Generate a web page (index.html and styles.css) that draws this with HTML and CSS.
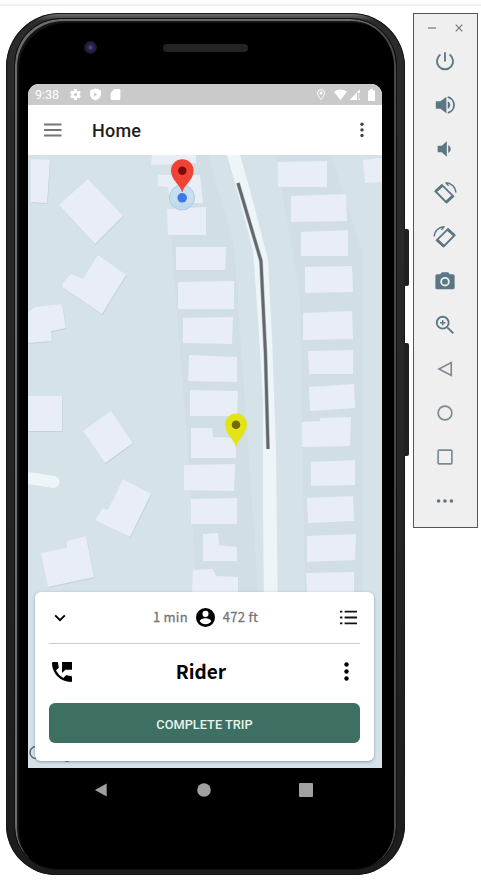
FILE: index.html
```html
<!DOCTYPE html>
<html lang="en">
<head>
<meta charset="utf-8">
<title>Home</title>
<link rel="stylesheet" href="styles.css">
</head>
<body>
<div class="topline"></div>
<main class="stage">
  <div class="phone">
    <i class="side-button power"></i>
    <i class="side-button volume"></i>
    <div class="bezel">
      <div class="forehead"><i class="camera"></i><i class="speaker"></i></div>
      <div class="screen">
        <div class="status">
          <span class="time">9:38</span>
          <svg class="s-gear" viewBox="0 0 24 24"><path d="M19.4 13a7.500 7.500 0 0 0 0-2l2.100-1.600a.5.500 0 0 0 .1-.7l-2-3.400a.5.500 0 0 0-.6-.2l-2.500 1a7.300 7.300 0 0 0-1.700-1l-.4-2.600a.5.500 0 0 0-.5-.5h-4a.5.500 0 0 0-.5.500L9 5.100a7.300 7.300 0 0 0-1.700 1l-2.500-1a.5.500 0 0 0-.6.200l-2 3.400a.5.500 0 0 0 .1.700L4.500 11a7.500 7.500 0 0 0 0 2l-2.200 1.600a.5.500 0 0 0-.1.700l2 3.400c.1.200.4.300.6.200l2.500-1a7.300 7.300 0 0 0 1.700 1l.4 2.600c0 .3.200.5.500.5h4c.3 0 .5-.2.500-.5l.4-2.600a7.300 7.300 0 0 0 1.700-1l2.500 1c.2.100.5 0 .6-.2l2-3.400a.5.500 0 0 0-.1-.7zM12 15a3 3 0 1 1 0-6 3 3 0 0 1 0 6z"/></svg>
          <svg class="s-shield" viewBox="0 0 24 24"><path fill-rule="evenodd" d="M12 1 2 4v8c0 5 5 9.500 10 11 5-1.500 10-6 10-11V4zM9.500 8 15 12l-5.500 4z"/></svg>
          <svg class="s-card" viewBox="0 0 24 24"><path d="M10 2h9a2 2 0 0 1 2 2v16a2 2 0 0 1-2 2H5a2 2 0 0 1-2-2V9z"/></svg>
          <span class="grow"></span>
          <svg class="s-pin" viewBox="0 0 24 24"><path fill="none" stroke="#fff" stroke-width="2" d="M12 22C8 17 5 13 5 9a7 7 0 0 1 14 0c0 4-3 8-7 13z"/><circle cx="12" cy="9" r="3"/></svg>
          <svg class="s-wifi" viewBox="0 0 24 24"><path d="M12 22 0 7a19 19 0 0 1 24 0z"/></svg>
          <svg class="s-signal" viewBox="0 0 24 24"><path d="M1 22 22 1v7h-6v14zM19 19h3v3h-3z"/><path d="M18 10h3v7h-3z" opacity=".4"/></svg>
          <svg class="s-battery" viewBox="0 0 14 24"><path d="M4 0h6v3h4v21H0V3h4z"/></svg>
        </div>
        <header class="appbar">
          <svg class="menu" viewBox="0 0 18 14"><path d="M0 1.500h17.500M0 7h17.500M0 12.500h17.500"/></svg>
          <h1>Home</h1>
          <svg class="more" viewBox="0 0 4 16"><circle cx="2" cy="2.300" r="1.700"/><circle cx="2" cy="7.900" r="1.700"/><circle cx="2" cy="13.500" r="1.700"/></svg>
        </header>
        <section class="map">
          <svg class="map-art" viewBox="28 155 354 613">
            <path class="yards" d="M170 155h38l26 90 24 345v20h-60l-10-160-16-200zM276 155h55l32 100v340h-58l-5-300z"/>
            <path class="road" d="M227 155 235 183 253 250 258 320 263 400 263 500 264 620H278L276 450 272 337 268 260 250 190 240 155z"/>
            <g class="shade" transform="translate(.6 1)">
              <path d="M31 159 50 160 47 203 31 202zM88 179 123 216 95 244 59 205zM98 255 126 275 102 314 62 287 63 283 71 274 83 279zM28 313 35 307 62 304 66 328 51 331 52 341 28 343zM28 396H62V431H28zM111 411 133 443 105 463 83 431zM123 479 151 494 130 537 108 525 112 500zM67 541 86 536 94 577 48 587 41 553 67 548z"/>
            </g>
            <g class="buildings">
              <path d="M31 159 50 160 47 203 31 202zM88 179 123 216 95 244 59 205zM98 255 126 275 102 314 62 287 63 283 71 274 83 279zM28 313 35 307 62 304 66 328 51 331 52 341 28 343zM28 396H62V431H28zM111 411 133 443 105 463 83 431zM123 479 151 494 130 537 95 520 103 508 108 510zM67 541 86 536 94 577 48 587 41 553 67 548z"/>
              <path d="M152 155H196V163L151 165zM158 175 200 175 203 203H170L168 187 158 186zM167 209 206 207V235H168zM176 247H226L225 270H176zM178 282 234 281V309H178zM183 318 233 317 232 344 183 343zM189 355 237 357V382L188 381zM190 390 238 391 237 416H190zM191 428H212L213 437 236 438V458H191zM184 465 235 464 234 491 184 490zM191 499 237 498V524H191zM203 534 218 533 219 545 237 547V561H203zM193 570 213 569 216 576 238 577V592H192z"/>
              <path d="M278 162 327 161V187H278zM291 196 346 194 347 221 291 222zM301 232 348 230V256H301zM305 267 352 266 353 292 305 293zM303 313 352 311 353 339 303 340zM308 351 353 350V374H309zM309 387 354 384 355 408 310 411zM302 422 320 421V418L351 417 350 446 302 447zM311 462 355 460V485L311 486zM307 498 353 496 354 521 308 523zM307 536 356 534 355 560 307 562zM306 573 354 572V592H307zM363 160 382 158V182L365 183z"/>
            </g>
            <path class="drive" d="M28 472 55 476Q60 478 59.500 483 58 488 53 488L28 484z"/>
            <path class="casing" d="M238 183 261 261 265.500 355 268 449"/>
            <path class="route" d="M238 183 261 261 265.500 355 268 449"/>
            <circle class="halo" cx="182" cy="197.500" r="12.500"/>
            <path class="pin-red" d="M182 192C180.500 185 171 180 171 170.500A11.300 11.300 0 0 1 193.600 170.500C193.600 180 184 185 182.500 192z"/>
            <circle class="eye-red" cx="182.300" cy="170.800" r="4.200"/>
            <circle class="dot" cx="182.200" cy="197.800" r="4.800"/>
            <path class="pin-yellow" d="M236 448C235 440 225 434 225 424.500A11 11 0 0 1 247 424.500C247 434 237 440 236 448z"/>
            <circle class="eye-yellow" cx="236" cy="424.800" r="4.300"/>
            <path class="credit" d="M36 746.500a6 6 0 0 0 0 12M64 760q3 2.500 6 0"/>
          </svg>
          <div class="card">
            <div class="row summary">
              <svg class="chevron" viewBox="0 0 12 8"><path d="M1.200 1.400 6 6.200 10.800 1.400"/></svg>
              <div class="eta">
                <span>1 min</span>
                <svg class="person" viewBox="2 2 20 20"><path d="M12 2a10 10 0 1 0 0 20 10 10 0 0 0 0-20zm0 3a3.200 3.200 0 1 1 0 6.400A3.200 3.200 0 0 1 12 5zm0 14.200a7.200 7.200 0 0 1-6-3.200c0-2 4-3.100 6-3.100s6 1.100 6 3.100a7.200 7.200 0 0 1-6 3.200z"/></svg>
                <span>472 ft</span>
              </div>
              <svg class="list" viewBox="0 0 17 15"><path d="M0 1.600h2.400M4.600 1.600H17M0 7.500h2.400M4.600 7.500H17M0 13.400h2.400M4.600 13.400H17"/></svg>
            </div>
            <div class="row rider">
              <svg class="phone-icon" viewBox="3 3 18 18"><path d="M20 15.500c-1.200 0-2.500-.2-3.600-.6-.3-.1-.7 0-1 .2l-2.200 2.200a15 15 0 0 1-6.600-6.600l2.200-2.200c.3-.2.400-.6.300-1A11.500 11.500 0 0 1 8.500 4c0-.5-.5-1-1-1H4c-.5 0-1 .5-1 1a17 17 0 0 0 17 17c.5 0 1-.5 1-1v-3.500c0-.5-.5-1-1-1zM12 3v10l3-3h6V3z"/></svg>
              <h2>Rider</h2>
              <svg class="dots" viewBox="0 0 5 19"><circle cx="2.500" cy="2.500" r="2.200"/><circle cx="2.500" cy="9.500" r="2.200"/><circle cx="2.500" cy="16.500" r="2.200"/></svg>
            </div>
            <button class="complete">COMPLETE TRIP</button>
          </div>
        </section>
      </div>
      <nav class="android-nav">
        <svg viewBox="0 0 14 16"><path d="M13.500 .5v15L0 8z"/></svg>
        <svg viewBox="0 0 14 14"><circle cx="7" cy="7" r="6.800"/></svg>
        <svg viewBox="0 0 14 14"><rect width="14" height="14" rx="1"/></svg>
      </nav>
    </div>
  </div>
  <aside class="toolbar">
    <div class="window-controls">
      <svg viewBox="0 0 8 8"><path d="M0 4h8"/></svg>
      <svg viewBox="0 0 8 8"><path d="M.7.700l6.600 6.600M7.300.700.7 7.300"/></svg>
    </div>
    <div class="tool"><svg viewBox="0 0 24 24"><path class="line" d="M12 2.500v10M7 5a8.800 8.800 0 1 0 10 0"/></svg></div>
    <div class="tool"><svg viewBox="0 0 24 24"><path d="M2 8v8h5l6.500 5V3L7 8zM15 7.500v9a5 5 0 0 0 0-9z"/><path class="line" d="M15 3.500a8.700 8.700 0 0 1 0 17"/></svg></div>
    <div class="tool"><svg viewBox="0 0 24 24"><path d="M4 8.500v7h4.500l5.500 5v-17l-5.500 5zM15.500 7.500v9a5 5 0 0 0 0-9z"/></svg></div>
    <div class="tool"><svg viewBox="0 0 24 24"><g id="rotate"><path class="line" d="M8.800 3.300 21 15.500l-7.500 6.800L1.500 10z"/><path class="thick" d="M9.200 3.700 2 10.200M20.500 15.200l-7 6.500"/><path class="thin" d="M12.500 .8A11 11 0 0 1 23.800 11.500M12.800 .8l3.200 3.400"/></g></svg></div>
    <div class="tool"><svg viewBox="0 0 24 24"><use href="#rotate" transform="matrix(-1 0 0 1 24 0)"/></svg></div>
    <div class="tool"><svg viewBox="0 0 24 24"><path fill-rule="evenodd" d="M8.500 2.500 6.800 4.500H3.500a2 2 0 0 0-2 2v12.500a2 2 0 0 0 2 2h17a2 2 0 0 0 2-2V6.500a2 2 0 0 0-2-2h-3.300L15.500 2.500zM12 7.500a5.200 5.200 0 1 1 0 10.400 5.200 5.200 0 0 1 0-10.400zm0 2a3.200 3.200 0 1 0 0 6.400 3.200 3.200 0 0 0 0-6.400z"/></svg></div>
    <div class="tool"><svg viewBox="0 0 24 24"><circle class="line" cx="9.500" cy="9.500" r="6.500"/><path class="line" d="m14.500 14.500 6.500 6.500"/><path class="thin" d="M6.500 9.500h6M9.500 6.500v6"/></svg></div>
    <div class="tool"><svg viewBox="0 0 24 24"><path class="outline" d="M18.800 5v14L5.500 12z"/></svg></div>
    <div class="tool"><svg viewBox="0 0 24 24"><circle class="outline" cx="12" cy="12" r="7.500"/></svg></div>
    <div class="tool"><svg viewBox="0 0 24 24"><rect class="outline" x="4.500" y="4.500" width="15" height="15" rx="1"/></svg></div>
    <div class="tool"><svg viewBox="0 0 24 24"><circle cx="5" cy="12" r="2"/><circle cx="12" cy="12" r="2"/><circle cx="19" cy="12" r="2"/></svg></div>
  </aside>
</main>
</body>
</html>
```
FILE: styles.css
```css
* { box-sizing: border-box; }
body { margin: 0; background: #fff; font-family: Roboto, "Liberation Sans", sans-serif; overflow: hidden; }
svg { display: block; flex: none; }
.topline { height: 2px; margin-top: 4px; background: #f0f0f0; }
.stage { display: flex; align-items: flex-start; gap: 8px; padding: 7px 0 0 6px; }

.phone {
  position: relative;
  width: 399px;
  height: 862px;
  padding: 5px 8px;
  border-radius: 54px 54px 50px 50px;
  background: linear-gradient(#777 0, #2b2b2b 8px, #262626 50%, #1c1c1c 100%);
  box-shadow: inset 0 0 0 1px #161616;
}
.bezel {
  display: flex;
  flex-direction: column;
  height: 852px;
  padding: 0 13px;
  border: 1px solid #111;
  border-radius: 47px 47px 43px 43px;
  background: #000;
  box-shadow: inset 2px 2px 0 #6c6c6c, inset -2px 1px 0 #484848, inset 4px 4px 1px #151515;
}
.side-button { position: absolute; left: 398px; width: 5px; border-radius: 0 2px 2px 0; background: #202020; }
.power { top: 216px; height: 57px; }
.volume { top: 330px; height: 113px; }
.forehead { display: flex; align-items: flex-start; height: 65px; flex: none; padding: 22px 0 0 56px; }
.camera { width: 13px; height: 13px; border-radius: 50%; background: radial-gradient(circle, #55559a 0, #292750 30%, #1d1b2c 60%, #16151c 100%); }
.speaker { width: 85px; height: 8px; margin: 3px 0 0 66px; border-radius: 4px; background: #242424; }
.screen { width: 354px; height: 684px; flex: none; overflow: hidden; border-radius: 11px 11px 0 0; background: #fff; }

.status { display: flex; align-items: center; height: 21px; padding: 0 7px; background: #cacaca; color: #fff; }
.status svg { fill: #fff; }
.time { width: 34px; font-size: 12.5px; line-height: 21px; }
.s-gear { width: 13px; height: 13px; }
.s-shield { width: 13px; height: 13px; margin-left: 7px; }
.s-card { width: 13px; height: 13px; margin-left: 7px; }
.grow { flex: 1; }
.s-pin { width: 12px; height: 13px; }
.s-wifi { width: 13px; height: 13px; margin-left: 7px; }
.s-signal { width: 12px; height: 12px; margin-left: 2px; }
.s-battery { width: 7px; height: 12px; margin-left: 7px; }

.appbar { display: flex; align-items: center; height: 50px; padding: 0 18px 0 16px; }
.menu { width: 18px; height: 14px; fill: none; stroke: #757575; stroke-width: 1.8; }
.appbar h1 { flex: 1; margin: 1px 0 0 30px; color: #1f1f1f; font-size: 18px; font-weight: 500; letter-spacing: .2px; }
.more { width: 4px; height: 16px; fill: #444; }

.map { position: relative; height: 613px; background: #d5e2e8; }
.map-art { width: 354px; height: 613px; }
.yards { fill: #d1dce4; opacity: .65; }
.road { fill: #edf5f8; }
.shade { fill: #c6d0d8; }
.buildings { fill: #e9edf6; }
.drive { fill: #edf5f8; }
.casing, .route { fill: none; stroke: #b4bcc0; stroke-width: 4; stroke-linejoin: round; }
.route { stroke: #62686b; stroke-width: 2.8; }
.halo { fill: #b8d8ee; fill-opacity: .75; stroke: #abcbdc; }
.dot { fill: #3e78e8; }
.pin-red { fill: #ef4336; }
.eye-red { fill: #7c0b09; }
.pin-yellow { fill: #e4e315; }
.eye-yellow { fill: #74690c; }
.credit { fill: none; stroke: #5e666b; stroke-width: 1.5; }

.card {
  position: absolute;
  top: 437px;
  left: 7px;
  width: 339px;
  height: 169px;
  padding: 0 14px;
  border-radius: 6px;
  background: #fff;
  box-shadow: 0 1px 3px rgba(60, 70, 80, .45);
  font-family: "Noto Sans CJK SC", "Noto Sans", sans-serif;
}
.row { display: flex; align-items: center; justify-content: space-between; }
.summary { height: 52px; padding: 0 3px 0 5px; border-bottom: 1px solid #ccc; }
.chevron { width: 12px; height: 8px; fill: none; stroke: #000; stroke-width: 1.9; }
.eta { display: flex; align-items: center; gap: 8px; margin: -1px 0 0 5px; color: #757575; font-size: 13px; line-height: 20px; letter-spacing: .25px; -webkit-text-stroke: .3px #757575; }
.person { width: 19px; height: 19px; }
.list { width: 17px; height: 15px; fill: none; stroke: #111; stroke-width: 1.9; }
.rider { height: 55px; padding: 0 11px 0 3px; }
.phone-icon { width: 20px; height: 20px; }
.rider h2 { margin: -2px 14px 0 0; font-size: 19px; line-height: 28px; font-weight: 700; }
.dots { width: 5px; height: 19px; }
.complete {
  display: block;
  width: 311px;
  height: 40px;
  margin-top: 4px;
  padding: 4px 0 0;
  border: 0;
  border-radius: 6px;
  background: #3d6f63;
  color: #e8f3ef;
  font: 500 12.8px/20px Roboto, sans-serif;
}

.android-nav { display: flex; justify-content: space-between; padding: 15px 70px 0 66px; }
.android-nav svg { width: 14px; height: 14px; fill: #a0a0a0; }

.toolbar { width: 65px; height: 515px; border: 1.5px solid #555; background: #efefef; }
.window-controls { display: flex; align-items: center; justify-content: space-between; height: 25px; padding: 3px 14px 0; }
.window-controls svg { width: 8px; height: 8px; fill: none; stroke: #777; stroke-width: 1.2; }
.tool { display: flex; align-items: center; justify-content: center; height: 44px; padding-right: 1px; }
.tool svg { width: 22px; height: 22px; fill: #5b7684; overflow: visible; }
.tool .line { fill: none; stroke: #5b7684; stroke-width: 2; }
.tool .thick { fill: none; stroke: #5b7684; stroke-width: 3; }
.tool .thin { fill: none; stroke: #5b7684; stroke-width: 1.5; }
.tool .outline { fill: none; stroke: #7b8a92; stroke-width: 1.8; }
```
